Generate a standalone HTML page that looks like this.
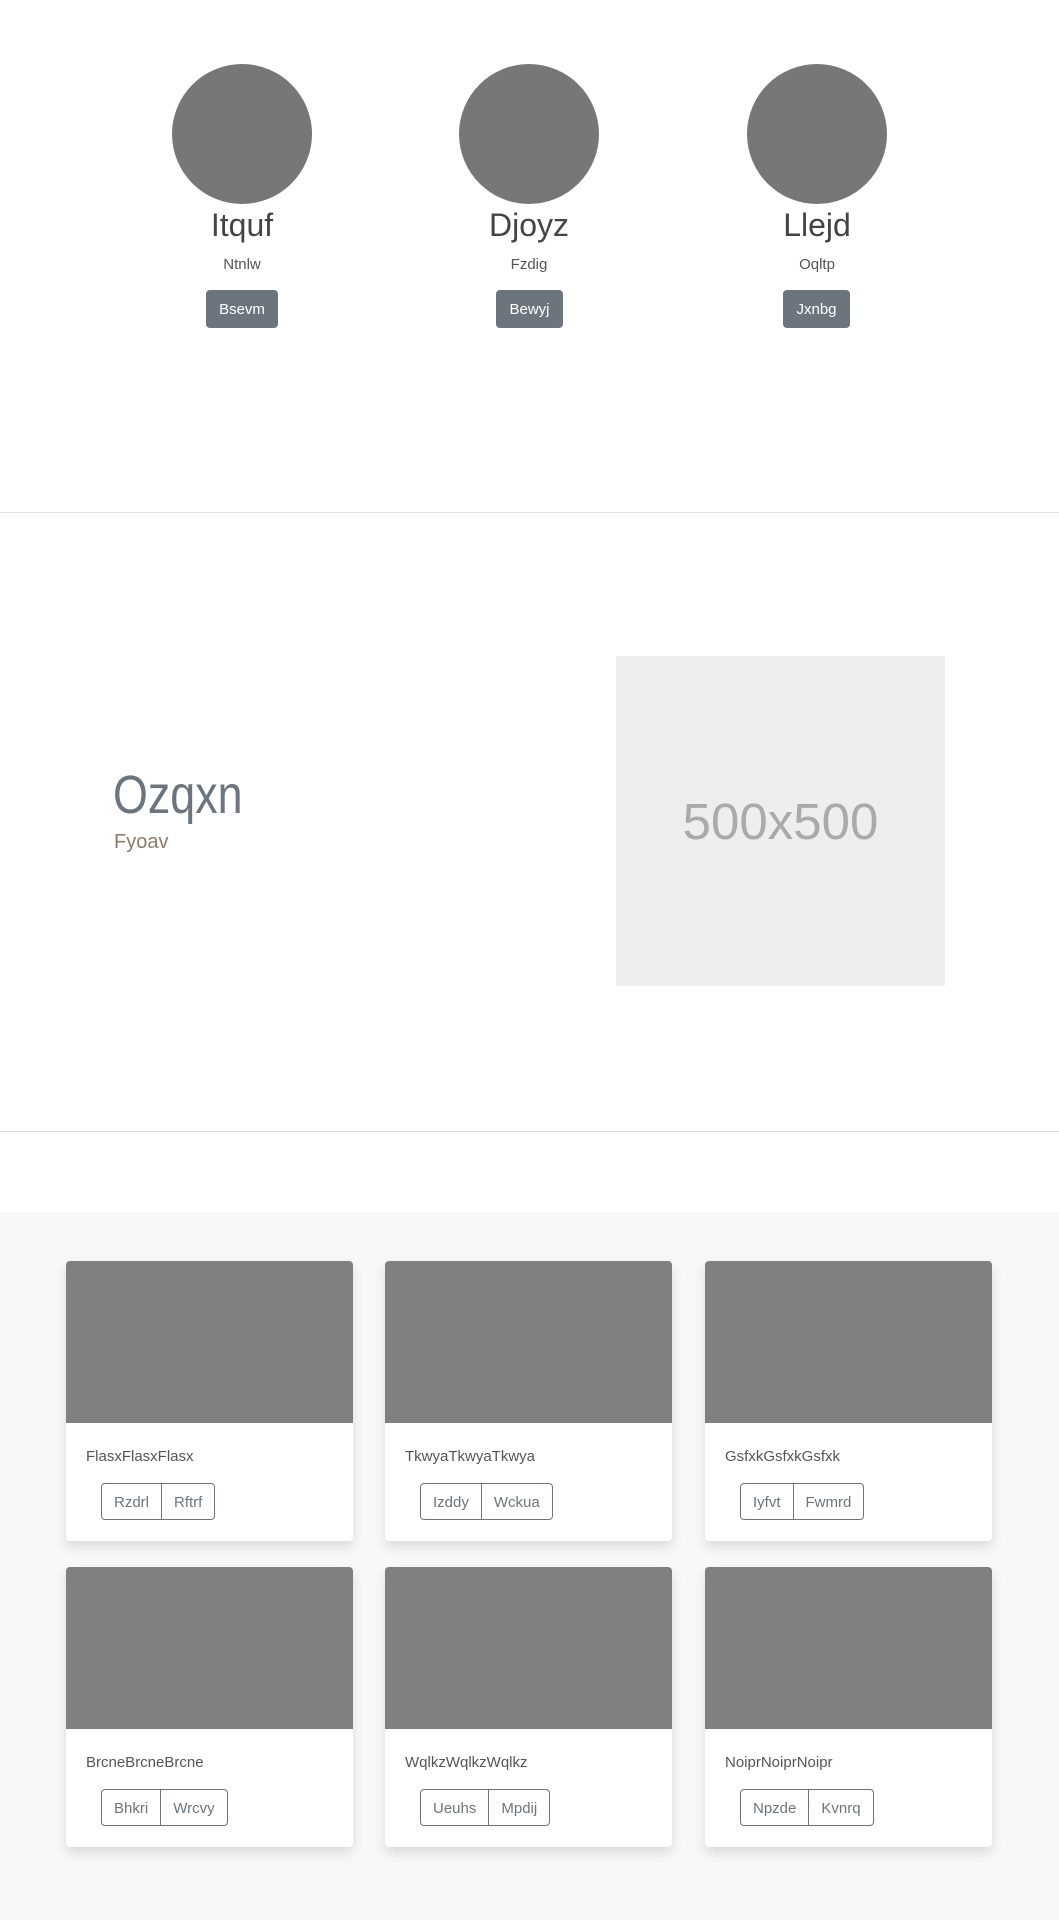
<!DOCTYPE html>
<html><head><meta charset="utf-8"><style>
*{box-sizing:border-box;margin:0;padding:0}
body{width:1059px;height:1920px;overflow:hidden;background:#fff;font-family:"Liberation Sans",sans-serif;position:relative}
.a{position:absolute}
.circ{width:140px;height:140px;border-radius:50%;background:#777;top:64px}
.nm{font-size:32px;color:#444;width:200px;text-align:center;top:207px}
.sb{font-size:15px;color:#555;width:200px;text-align:center;top:256px}
.btn{background:#6c757d;color:#fff;font-size:15px;height:38px;line-height:39px;border-radius:4px;top:290px;text-align:center}
.hr{left:0;width:1059px;height:1px;background:#e2e2e2}
.card{background:#fff;width:287px;height:280px;border-radius:4px;box-shadow:0 6px 12px rgba(0,0,0,.12);overflow:hidden}
.card .img{height:162px;background:#808080}
.card .t{position:absolute;left:20px;top:187px;font-size:15px;color:#555}
.grp{position:absolute;left:35px;top:222px;height:37px;border:1px solid #6c757d;border-radius:4px;display:flex}
.grp span{font-size:15px;color:#6c757d;line-height:37px;padding:0 12px}
.grp span+span{border-left:1px solid #6c757d}
</style></head><body>
<div class="a circ" style="left:172px"></div>
<div class="a circ" style="left:459px"></div>
<div class="a circ" style="left:747px"></div>
<div class="a nm" style="left:142px">Itquf</div>
<div class="a nm" style="left:429px">Djoyz</div>
<div class="a nm" style="left:717px">Llejd</div>
<div class="a sb" style="left:142px">Ntnlw</div>
<div class="a sb" style="left:429px">Fzdig</div>
<div class="a sb" style="left:717px">Oqltp</div>
<div class="a btn" style="left:206px;width:72px">Bsevm</div>
<div class="a btn" style="left:496px;width:67px">Bewyj</div>
<div class="a btn" style="left:783px;width:67px">Jxnbg</div>
<div class="a hr" style="top:512px"></div>
<div class="a" style="left:113px;top:768px;font-size:54px;color:#6c757d;line-height:1;transform:scaleX(0.83);transform-origin:0 0">Ozqxn</div>
<div class="a" style="left:114px;top:832px;font-size:20px;color:#8b7b6b;line-height:1">Fyoav</div>
<div class="a" style="left:616px;top:656px;width:329px;height:330px;background:#eee;color:#aaa;font-size:51px;display:flex;align-items:center;justify-content:center">500x500</div>
<div class="a hr" style="top:1131px"></div>
<div class="a" style="left:0;top:1212px;width:1059px;height:708px;background:#f7f8fa"></div>

<div class="a card" style="left:66px;top:1261px"><div class="img"></div><div class="t">FlasxFlasxFlasx</div><div class="grp"><span>Rzdrl</span><span>Rftrf</span></div></div>
<div class="a card" style="left:385px;top:1261px"><div class="img"></div><div class="t">TkwyaTkwyaTkwya</div><div class="grp"><span>Izddy</span><span>Wckua</span></div></div>
<div class="a card" style="left:705px;top:1261px"><div class="img"></div><div class="t">GsfxkGsfxkGsfxk</div><div class="grp"><span>Iyfvt</span><span>Fwmrd</span></div></div>
<div class="a card" style="left:66px;top:1567px"><div class="img"></div><div class="t">BrcneBrcneBrcne</div><div class="grp"><span>Bhkri</span><span>Wrcvy</span></div></div>
<div class="a card" style="left:385px;top:1567px"><div class="img"></div><div class="t">WqlkzWqlkzWqlkz</div><div class="grp"><span>Ueuhs</span><span>Mpdij</span></div></div>
<div class="a card" style="left:705px;top:1567px"><div class="img"></div><div class="t">NoiprNoiprNoipr</div><div class="grp"><span>Npzde</span><span>Kvnrq</span></div></div>
</body></html>
